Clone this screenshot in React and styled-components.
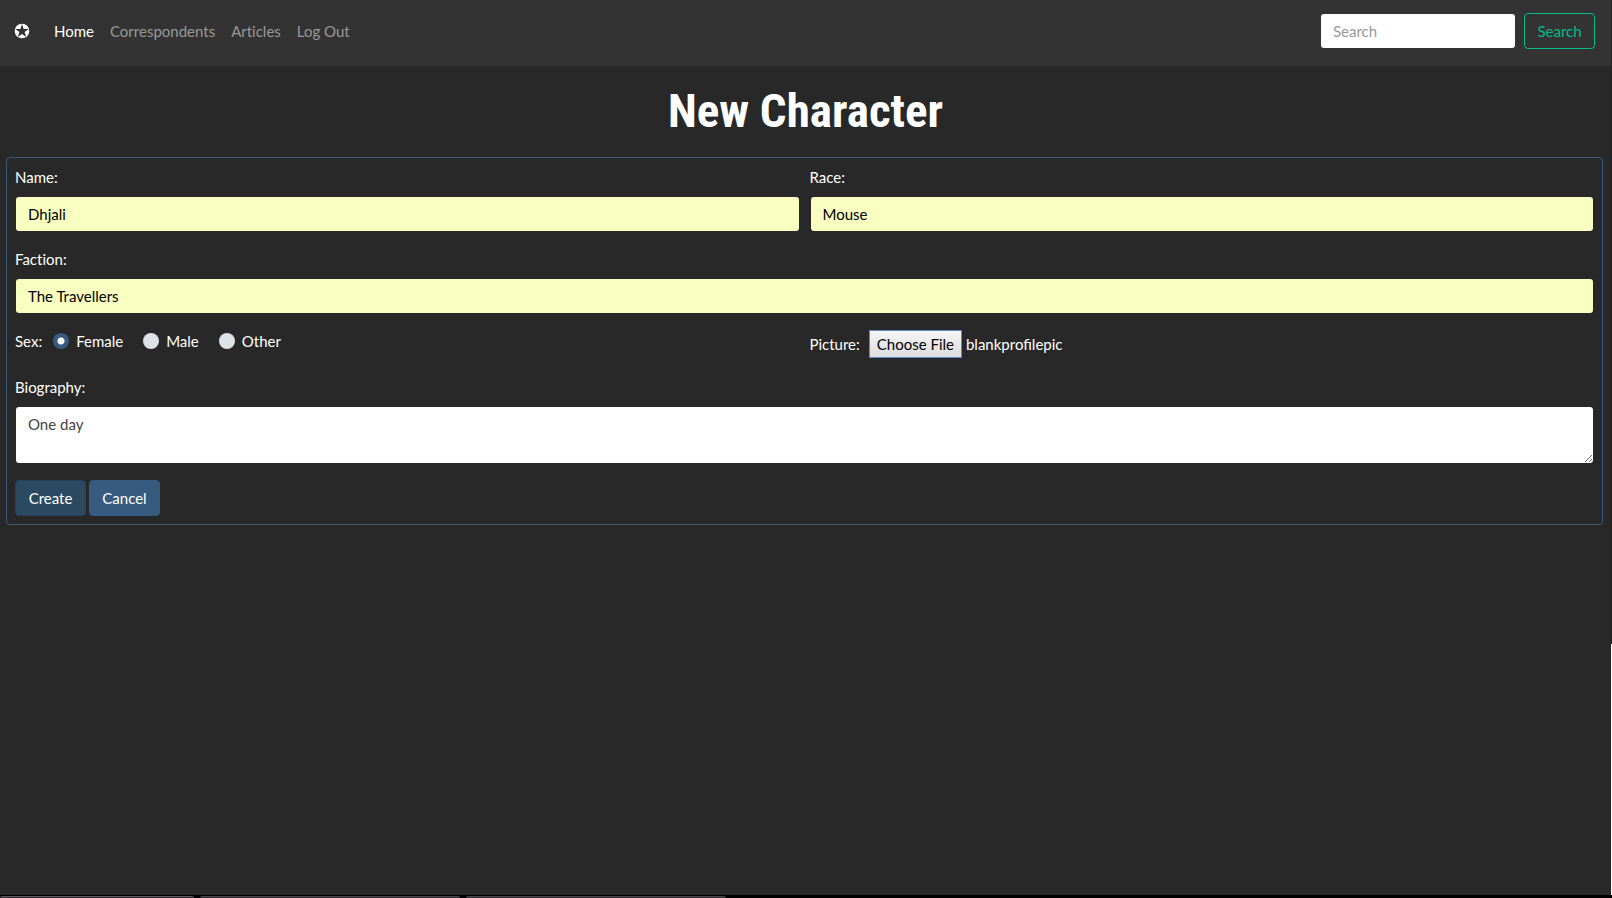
import React, { useRef, useState } from "react";
import styled, { createGlobalStyle } from "styled-components";

const GlobalStyle = createGlobalStyle`
  *, *::before, *::after { box-sizing: border-box; }
  body {
    margin: 0;
    background: #282828;
    color: #fff;
    font-family: Lato, "Open Sans", sans-serif;
    font-size: 15px;
    line-height: 22px;
    font-variant-ligatures: no-common-ligatures;
  }
  button, input, textarea { font: inherit; margin: 0; }
`;

const Shell = styled.div`
  min-height: 100vh;
  display: flex;
  flex-direction: column;
`;

const Viewport = styled.div`
  flex: 1;
  display: flex;
`;

const Page = styled.div`
  flex: 1;
  min-width: 0;
`;

const WindowEdge = styled.div`
  width: 1px;
  background: linear-gradient(#222 0 72%, #fff 72%);
`;

const Taskbar = styled.div`
  display: flex;
  gap: 6px;
  height: 3px;
  padding-top: 1px;
  background: #000;
`;

const TaskbarTab = styled.div`
  width: ${(p) => p.$width}px;
  border-top: 1px solid ${(p) => (p.$active ? "#5c5c5c" : "#484848")};
  border-radius: 2px 2px 0 0;
  background: #2c2a2c;
`;

const Navbar = styled.nav`
  display: flex;
  align-items: center;
  padding: 13px 16px 17px 14px;
  background: #333;
`;

const Brand = styled.a`
  display: flex;
  margin-right: 16px;
`;

const NavLinks = styled.div`
  display: flex;
  flex: 1;
`;

const NavLink = styled.a`
  padding: 0 8px;
  color: ${(p) => (p.$active ? "#fff" : "#999")};
  text-decoration: none;
`;

const SearchForm = styled.form`
  display: flex;
  gap: 8px;
`;

const TextInput = styled.input`
  display: block;
  width: ${(p) => p.$width || "100%"};
  height: 36px;
  padding: 6px 12px;
  border: 1px solid transparent;
  border-radius: 4px;
  background: ${(p) => (p.$filled ? "#f9ffc0" : "#fff")};
  background-clip: padding-box;
  color: #000;
  &::placeholder { color: #999; opacity: 1; }
`;

const TextArea = styled.textarea`
  display: block;
  width: 100%;
  height: 58px;
  padding: 6px 12px;
  border: 1px solid transparent;
  border-radius: 4px;
  background: #fff;
  background-clip: padding-box;
  color: #444;
  resize: vertical;
`;

const Button = styled.button`
  min-width: 71px;
  height: 36px;
  padding: 6px 12px;
  border: 1px solid ${(p) => p.$border || p.$fill};
  border-radius: 4px;
  background: ${(p) => p.$fill};
  color: ${(p) => p.$color || "#fff"};
`;

const Title = styled.h1`
  margin: 17px 0 18px;
  text-align: center;
  font-family: "Roboto Condensed", "Open Sans Condensed", Roboto, sans-serif;
  font-size: 47px;
  font-weight: 700;
  line-height: 56px;
`;

const CharacterForm = styled.form`
  margin: 0 8px 0 6px;
  padding: 8px;
  border: 1px solid #375a7f;
  border-radius: 4px;
`;

const Row = styled.div`
  display: grid;
  grid-template-columns: ${(p) => (p.$single ? "1fr" : "1fr 1fr")};
  column-gap: 10px;
  margin-bottom: 16px;
`;

const FieldLabel = styled.label`
  display: block;
  margin-bottom: 8px;
`;

const RadioSet = styled.fieldset`
  display: flex;
  align-items: flex-start;
  gap: 20px;
  min-width: 0;
  margin: 0;
  padding: 0;
  border: 0;
`;

const RadioLegend = styled.legend`
  float: left;
  margin-right: -9px;
  padding: 0;
`;

const RadioLabel = styled.label`
  display: flex;
  align-items: center;
  gap: 7px;
`;

const Radio = styled.input`
  appearance: none;
  width: 16px;
  height: 16px;
  border-radius: 50%;
  background: #dee2e6;
  &:checked {
    background: radial-gradient(circle, #fff 0 3px, #375a7f 4px);
  }
`;

const FileField = styled.div`
  display: flex;
  height: 28px;
  align-items: center;
`;

const HiddenFile = styled.input`
  display: none;
`;

const FileButton = styled.button`
  height: 28px;
  margin: 0 4px 0 9px;
  padding: 0 7px;
  border: 1px solid #5e87c9;
  background: linear-gradient(#f6f6f6, #dcdcdc);
  color: #000;
`;

const FileName = styled.span`
  font-variant-ligatures: common-ligatures;
`;

const SplitRow = styled(Row)`
  min-height: 30px;
`;

const Actions = styled.div`
  display: flex;
  gap: 3px;
`;

function StarBadge() {
  return (
    <svg width="16" height="16" viewBox="0 0 16 16" aria-hidden="true">
      <circle cx="8" cy="8" r="7.3" fill="#fff" />
      <path
        d="M8 1 9.6 6H14.8L10.6 9.1 12.2 14 8 11 3.8 14 5.4 9.1 1.2 6H6.4Z"
        fill="#333"
      />
    </svg>
  );
}

function Field({ id, label, value }) {
  return (
    <div>
      <FieldLabel htmlFor={id}>{label}</FieldLabel>
      <TextInput id={id} name={id} type="text" defaultValue={value} $filled />
    </div>
  );
}

function PictureField() {
  const picker = useRef(null);
  const [fileName, setFileName] = useState("blankprofilepic");
  return (
    <FileField>
      <label htmlFor="picture">Picture:</label>
      <HiddenFile
        ref={picker}
        id="picture"
        type="file"
        onChange={(e) => e.target.files[0] && setFileName(e.target.files[0].name)}
      />
      <FileButton type="button" onClick={() => picker.current.click()}>
        Choose File
      </FileButton>
      <FileName>{fileName}</FileName>
    </FileField>
  );
}

const links = ["Home", "Correspondents", "Articles", "Log Out"];
const sexes = ["Female", "Male", "Other"];

export default function App() {
  return (
    <Shell>
      <GlobalStyle />
      <Viewport>
        <Page>
          <Navbar>
            <Brand href="#" aria-label="Start page">
              <StarBadge />
            </Brand>
            <NavLinks>
              {links.map((name, i) => (
                <NavLink key={name} href="#" $active={i === 0}>
                  {name}
                </NavLink>
              ))}
            </NavLinks>
            <SearchForm onSubmit={(e) => e.preventDefault()}>
              <TextInput type="search" placeholder="Search" aria-label="Search" $width="196px" />
              <Button type="submit" $fill="transparent" $border="#00bc8c" $color="#00bc8c">
                Search
              </Button>
            </SearchForm>
          </Navbar>
          <main>
            <Title>New Character</Title>
            <CharacterForm onSubmit={(e) => e.preventDefault()}>
              <Row>
                <Field id="name" label="Name:" value="Dhjali" />
                <Field id="race" label="Race:" value="Mouse" />
              </Row>
              <Row $single>
                <Field id="faction" label="Faction:" value="The Travellers" />
              </Row>
              <SplitRow>
                <RadioSet>
                  <RadioLegend>Sex:</RadioLegend>
                  {sexes.map((name, i) => (
                    <RadioLabel key={name}>
                      <Radio type="radio" name="sex" value={name} defaultChecked={i === 0} />
                      {name}
                    </RadioLabel>
                  ))}
                </RadioSet>
                <PictureField />
              </SplitRow>
              <Row $single>
                <div>
                  <FieldLabel htmlFor="biography">Biography:</FieldLabel>
                  <TextArea id="biography" defaultValue="One day" />
                </div>
              </Row>
              <Actions>
                <Button type="submit" $fill="#2b4a61" $border="#28415b">
                  Create
                </Button>
                <Button type="button" $fill="#375a7f">
                  Cancel
                </Button>
              </Actions>
            </CharacterForm>
          </main>
        </Page>
        <WindowEdge />
      </Viewport>
      <Taskbar>
        <TaskbarTab $width={194} $active />
        <TaskbarTab $width={260} />
        <TaskbarTab $width={260} />
      </Taskbar>
    </Shell>
  );
}
